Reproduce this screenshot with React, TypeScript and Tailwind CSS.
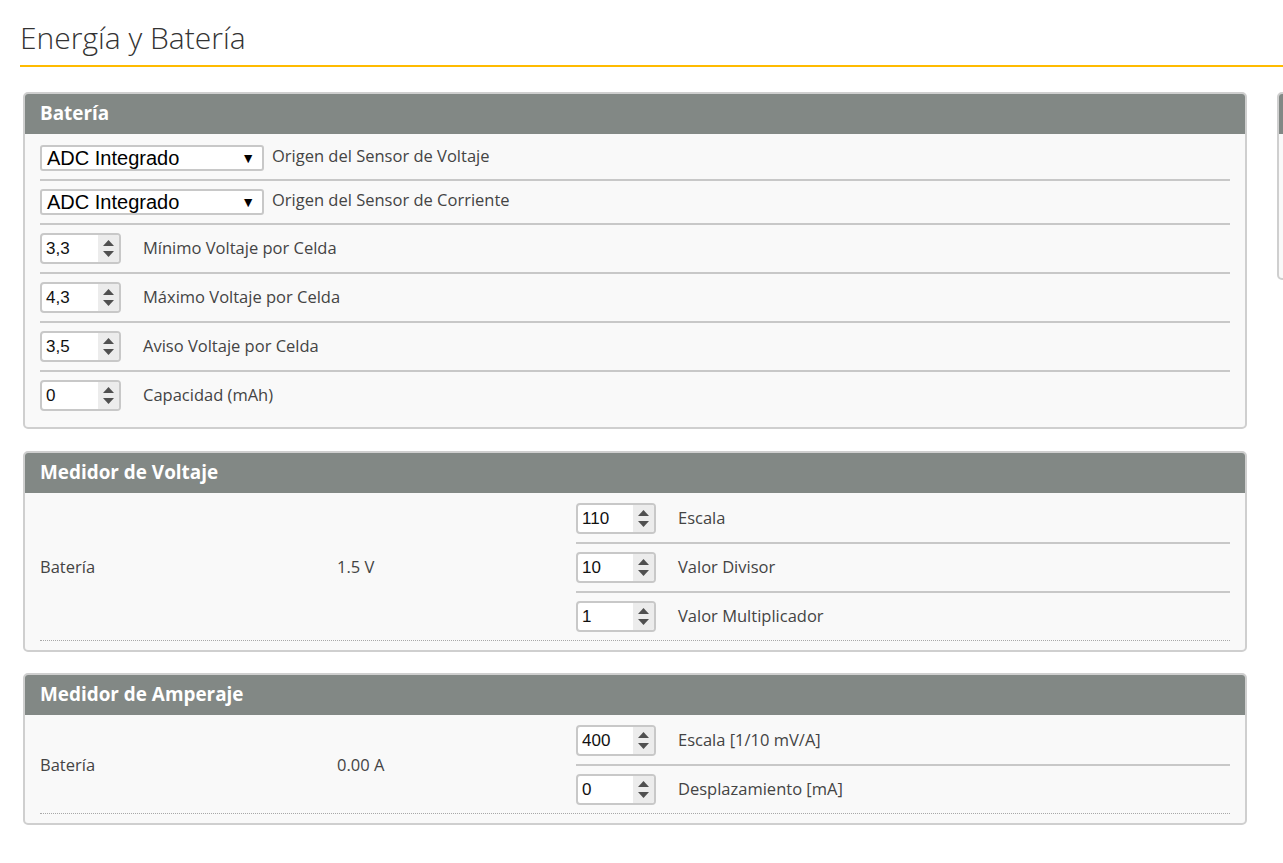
import React from 'react';

const font = { fontFamily: '"Open Sans", "Liberation Sans", sans-serif' };

function Select({ value }: { value: string }) {
  return (
    <div className="flex h-[26px] w-[224px] shrink-0 items-center justify-between rounded-[3px] border-2 border-[#c8c8c8] bg-white pl-[5px] pr-[7px] font-['Liberation_Sans',Arial,sans-serif] text-[20px] text-black">
      <span className="leading-none">{value}</span>
      <span className="text-[14px] leading-none">▼</span>
    </div>
  );
}

function NumberInput({ value, width = 'w-[81px]' }: { value: string; width?: string }) {
  return (
    <div className={`flex h-[31px] ${width} shrink-0 overflow-hidden rounded-[4px] border-2 border-[#c8c8c8] bg-white`}>
      <span className="flex flex-1 items-center pl-[4px] font-['Liberation_Sans',Arial,sans-serif] text-[17px] leading-none text-[#111]">
        {value}
      </span>
      <span className="flex w-[21px] flex-col items-center justify-center gap-[5px] bg-[#ececec]">
        <svg width="11" height="6" viewBox="0 0 11 6">
          <path d="M5.5 0 L11 6 L0 6 Z" fill="#505050" />
        </svg>
        <svg width="11" height="6" viewBox="0 0 11 6">
          <path d="M0 0 L11 0 L5.5 6 Z" fill="#505050" />
        </svg>
      </span>
    </div>
  );
}

function Panel({ title, className = '', children }: { title: string; className?: string; children: React.ReactNode }) {
  return (
    <div className={`ml-[3px] overflow-hidden rounded-[5px] border-2 border-[#cfcfcf] bg-[#f9f9f9] ${className}`}>
      <div className="flex h-[40px] items-center bg-[#828885] px-[15px] pb-[2px] text-[18.9px] font-bold text-white">
        {title}
      </div>
      {children}
    </div>
  );
}

function Row({ children, last }: { children: React.ReactNode; last?: boolean }) {
  return (
    <div className={`flex items-center py-[8px] ${last ? '' : 'border-b-2 border-[#c8c8c8]'}`}>
      {children}
    </div>
  );
}

function MeterTable({
  name,
  reading,
  fields,
}: {
  name: string;
  reading: string;
  fields: { value: string; label: string }[];
}) {
  return (
    <div className="px-[15px] pb-[9px] pt-[2px]">
      <div className="flex border-b border-dotted border-[#a8a8a8]">
        <div className="flex w-[297px] shrink-0 items-center text-[16.5px] text-[#444]">{name}</div>
        <div className="flex w-[239px] shrink-0 items-center text-[16.5px] text-[#444]">{reading}</div>
        <div className="flex-1">
          {fields.map((f, i) => (
            <Row key={f.label} last={i === fields.length - 1}>
              <NumberInput value={f.value} width="w-[80px]" />
              <span className="ml-[22px] text-[16.5px] text-[#444]">{f.label}</span>
            </Row>
          ))}
        </div>
      </div>
    </div>
  );
}

export default function App() {
  const cellRows = [
    { value: '3,3', label: 'Mínimo Voltaje por Celda' },
    { value: '4,3', label: 'Máximo Voltaje por Celda' },
    { value: '3,5', label: 'Aviso Voltaje por Celda' },
    { value: '0', label: 'Capacidad (mAh)' },
  ];

  return (
    <div className="h-[863px] w-full overflow-hidden bg-white" style={font}>
      <div className="w-[1600px] pl-[20px]">
        <h1 className="mt-[18px] border-b-2 border-[#ffbb00] pb-[7px] text-[30px] font-light leading-[40px] text-[#333]">
          Energía y Batería
        </h1>

        <div className="mt-[25px] flex gap-[30px]">
          {/* left column */}
          <div className="flex w-[1227px] shrink-0 flex-col">
            <Panel title="Batería">
              <div className="px-[15px] pb-[8px] pt-[3px]">
                <Row>
                  <Select value="ADC Integrado" />
                  <span className="mb-[4px] ml-[8px] text-[16.5px] leading-[18px] text-[#444]">Origen del Sensor de Voltaje</span>
                </Row>
                <Row>
                  <Select value="ADC Integrado" />
                  <span className="mb-[4px] ml-[8px] text-[16.5px] leading-[18px] text-[#444]">Origen del Sensor de Corriente</span>
                </Row>
                {cellRows.map((r, i) => (
                  <Row key={r.label} last={i === cellRows.length - 1}>
                    <NumberInput value={r.value} />
                    <span className="ml-[22px] text-[16.5px] text-[#444]">{r.label}</span>
                  </Row>
                ))}
              </div>
            </Panel>

            <Panel title="Medidor de Voltaje" className="mt-[22px]">
              <MeterTable
                name="Batería"
                reading="1.5 V"
                fields={[
                  { value: '110', label: 'Escala' },
                  { value: '10', label: 'Valor Divisor' },
                  { value: '1', label: 'Valor Multiplicador' },
                ]}
              />
            </Panel>

            <Panel title="Medidor de Amperaje" className="mt-[21px]">
              <MeterTable
                name="Batería"
                reading="0.00 A"
                fields={[
                  { value: '400', label: 'Escala [1/10 mV/A]' },
                  { value: '0', label: 'Desplazamiento [mA]' },
                ]}
              />
            </Panel>
          </div>

          {/* right column, mostly off screen */}
          <div className="w-[300px] shrink-0">
            <div className="h-[188px] overflow-hidden rounded-[5px] border-2 border-[#cfcfcf] bg-[#f9f9f9]">
              <div className="h-[40px] bg-[#828885]" />
            </div>
          </div>
        </div>
      </div>
    </div>
  );
}
